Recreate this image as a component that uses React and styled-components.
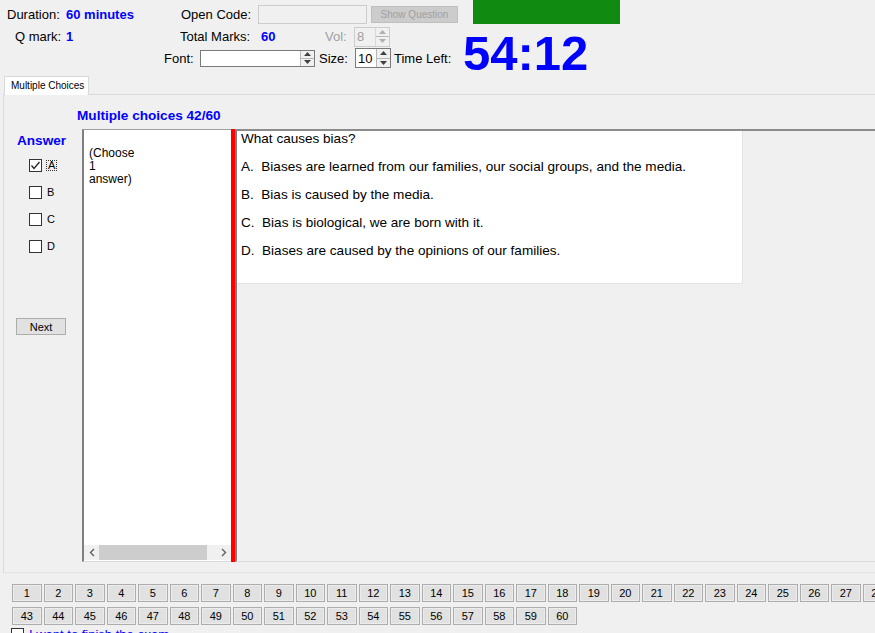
import React from "react";
import styled, { createGlobalStyle } from "styled-components";

const GlobalStyle = createGlobalStyle`
  html, body {
    margin: 0;
    padding: 0;
    background: #f0f0f0;
    overflow: hidden;
  }
  body {
    font-family: "Liberation Sans", Arial, sans-serif;
    font-size: 13px;
    color: #000;
  }
`;

const Screen = styled.div`
  width: 875px;
  height: 633px;
  overflow: hidden;
  background: #f0f0f0;
`;

/* ---------- header ---------- */

const Header = styled.header`
  display: flex;
  height: 76px;
`;

const Column = styled.div`
  display: flex;
  flex-direction: column;
  width: ${(p) => p.$w}px;
  padding-top: 2px;
  flex-shrink: 0;
`;

const Line = styled.div`
  display: flex;
  align-items: center;
  height: ${(p) => p.$h}px;
  padding-left: ${(p) => p.$indent || 0}px;
  white-space: nowrap;
`;

const Label = styled.span`
  width: ${(p) => (p.$w ? `${p.$w}px` : "auto")};
  margin-left: ${(p) => p.$ml || 0}px;
  flex-shrink: 0;
  color: ${(p) => (p.$muted ? "#a0a0a0" : "#000")};
`;

const Value = styled.span`
  width: ${(p) => (p.$w ? `${p.$w}px` : "auto")};
  flex-shrink: 0;
  font-weight: bold;
  color: #0000ff;
`;

const TextBox = styled.div`
  width: ${(p) => p.$w}px;
  height: ${(p) => p.$h}px;
  box-sizing: border-box;
  border: 1px solid #cccccc;
  background: #f0f0f0;
`;

const DisabledButton = styled.div`
  width: 87px;
  height: 17px;
  margin-left: 4px;
  box-sizing: border-box;
  border: 1px solid #bfbfbf;
  background: #cccccc;
  color: #a0a0a0;
  font-size: 10px;
  display: flex;
  align-items: center;
  justify-content: center;
`;

const SpinBox = styled.div`
  display: flex;
  width: ${(p) => p.$w}px;
  height: ${(p) => p.$h}px;
  box-sizing: border-box;
  border: 1px solid ${(p) => (p.$disabled ? "#cccccc" : "#7a7a7a")};
  background: ${(p) => (p.$disabled ? "#f0f0f0" : "#fff")};
  color: ${(p) => (p.$disabled ? "#a0a0a0" : "#000")};
  flex-shrink: 0;
`;

const SpinValue = styled.div`
  flex: 1;
  display: flex;
  align-items: center;
  padding-left: 2px;
  font-size: 13px;
`;

const SpinArrows = styled.div`
  width: 13px;
  display: flex;
  flex-direction: column;
  border-left: 1px solid ${(p) => (p.$disabled ? "#d8d8d8" : "#b8b8b8")};
`;

const SpinHalf = styled.div`
  flex: 1;
  display: flex;
  align-items: center;
  justify-content: center;
  background: #f0f0f0;
  & + & {
    border-top: 1px solid ${(p) => (p.$disabled ? "#d8d8d8" : "#b8b8b8")};
  }
`;

const Spinner = ({ w, h, value, disabled }) => {
  const c = disabled ? "#b0b0b0" : "#404040";
  return (
    <SpinBox $w={w} $h={h} $disabled={disabled}>
      <SpinValue>{value}</SpinValue>
      <SpinArrows $disabled={disabled}>
        <SpinHalf $disabled={disabled}>
          <svg width="7" height="4" viewBox="0 0 7 4">
            <polygon points="0,4 3.5,0 7,4" fill={c} />
          </svg>
        </SpinHalf>
        <SpinHalf $disabled={disabled}>
          <svg width="7" height="4" viewBox="0 0 7 4">
            <polygon points="0,0 7,0 3.5,4" fill={c} />
          </svg>
        </SpinHalf>
      </SpinArrows>
    </SpinBox>
  );
};

const TimerCol = styled.div`
  display: flex;
  flex-direction: column;
`;

const GreenBar = styled.div`
  width: 147px;
  height: 24px;
  flex-shrink: 0;
  margin-left: 10px;
  background: #118a11;
`;

const TimeLeft = styled.div`
  margin-top: 5px;
  font-size: 49px;
  line-height: 49px;
  font-weight: bold;
  color: #0000ff;
`;

/* ---------- tab panel ---------- */

const TabStrip = styled.div`
  display: flex;
  height: 18px;
  padding-left: 4px;
`;

const Tab = styled.div`
  position: relative;
  z-index: 1;
  width: 85px;
  height: 19px;
  box-sizing: border-box;
  padding: 3px 0 0 6px;
  background: #fff;
  border: 1px solid #d9d9d9;
  border-bottom: none;
  font-size: 10px;
`;

const Panel = styled.section`
  margin-left: 3px;
  margin-right: -10px;
  border: 1px solid #d9d9d9;
  border-bottom-color: #e4e4e4;
  background: #f0f0f0;
  padding-bottom: 10px;
`;

const Heading = styled.div`
  height: 28px;
  padding: 6px 0 0 73px;
  display: flex;
  align-items: center;
  font-size: 13.6px;
  font-weight: bold;
  color: #0000ff;
`;

const MainRow = styled.div`
  display: flex;
  height: 433px;
`;

const AnswerCol = styled.div`
  width: 78px;
  flex-shrink: 0;
  display: flex;
  flex-direction: column;
`;

const AnswerTitle = styled.div`
  margin-top: 4px;
  padding-left: 13px;
  line-height: 16px;
  font-size: 13.6px;
  font-weight: bold;
  color: #0000ff;
`;

const ChoiceList = styled.div`
  margin-top: 3px;
  padding-left: 25px;
`;

const Choice = styled.div`
  display: flex;
  align-items: center;
  height: 27px;
`;

const Box = styled.span`
  width: 13px;
  height: 13px;
  box-sizing: border-box;
  border: 1px solid #333;
  background: #fff;
  display: flex;
  align-items: center;
  justify-content: center;
  flex-shrink: 0;
`;

const ChoiceLabel = styled.span`
  margin-left: ${(p) => (p.$focused ? 4 : 5)}px;
  font-size: 11px;
  line-height: 9px;
  padding: ${(p) => (p.$focused ? "0 1px" : "0")};
  border: ${(p) => (p.$focused ? "1px dotted #333" : "none")};
`;

const CheckBox = ({ checked }) => (
  <Box>
    {checked && (
      <svg width="11" height="11" viewBox="0 0 11 11">
        <polyline points="1.5,5.5 4,8.5 9.5,2" fill="none" stroke="#222" strokeWidth="1.3" />
      </svg>
    )}
  </Box>
);

const PlainButton = styled.div`
  width: 50px;
  height: 17px;
  margin: 58px 0 0 12px;
  box-sizing: border-box;
  border: 1px solid #adadad;
  background: #e1e1e1;
  font-size: 11px;
  display: flex;
  align-items: center;
  justify-content: center;
`;

const LeftBox = styled.div`
  width: 149px;
  flex-shrink: 0;
  box-sizing: border-box;
  display: flex;
  flex-direction: column;
  background: #fff;
  border-top: 1px solid #a0a0a0;
  border-left: 2px solid #808080;
  border-bottom: 1px solid #dcdcdc;
`;

const HintText = styled.div`
  flex: 1;
  padding: 17px 0 0 5px;
  font-size: 12px;
  line-height: 13px;
`;

const HScroll = styled.div`
  display: flex;
  height: 15px;
  margin-bottom: 1px;
  background: #f0f0f0;
`;

const ScrollArrow = styled.div`
  width: 15px;
  display: flex;
  align-items: center;
  justify-content: center;
`;

const ScrollTrack = styled.div`
  flex: 1;
  display: flex;
  align-items: stretch;
`;

const ScrollThumb = styled.div`
  width: 108px;
  background: #cdcdcd;
`;

const RedBar = styled.div`
  width: 4px;
  flex-shrink: 0;
  background: #ff0000;
`;

const RightArea = styled.div`
  flex: 1;
  min-width: 0;
  box-sizing: border-box;
  border-left: 2px solid #7d7d7d;
  border-top: 2px solid #8c8c8c;
  border-bottom: 1px solid #dcdcdc;
`;

const QuestionBox = styled.div`
  width: 506px;
  height: 153px;
  box-sizing: border-box;
  padding-left: 4px;
  background: #fff;
  border-right: 1px solid #e3e3e3;
  border-bottom: 1px solid #e3e3e3;
  font-size: 13.55px;
  line-height: 15px;
`;

const QLine = styled.div`
  margin-top: ${(p) => (p.$first ? 0 : 13)}px;
  white-space: pre;
`;

/* ---------- question navigator ---------- */

const Navigator = styled.nav`
  margin-top: 11px;
  padding-left: 12px;
  display: flex;
  flex-direction: column;
  gap: 5px;
`;

const NavRow = styled.div`
  display: flex;
  gap: 2px;
`;

const NumButton = styled.div`
  width: 29.5px;
  height: 18px;
  flex-shrink: 0;
  box-sizing: border-box;
  border: 1px solid #adadad;
  box-shadow: inset 0 0 0 1px #ececec;
  background: #e1e1e1;
  font-size: 11px;
  display: flex;
  align-items: center;
  justify-content: center;
`;

const FinishRow = styled.div`
  display: flex;
  align-items: center;
  margin-top: 2px;
  padding-left: 11px;
  gap: 5px;
  color: #0000ff;
`;

const range = (a, b) => Array.from({ length: b - a + 1 }, (_, i) => a + i);

const choices = ["A", "B", "C", "D"];
const options = [
  "A.  Biases are learned from our families, our social groups, and the media.",
  "B.  Bias is caused by the media.",
  "C.  Bias is biological, we are born with it.",
  "D.  Biases are caused by the opinions of our families.",
];

export default function App() {
  return (
    <Screen>
      <GlobalStyle />
      <Header>
        <Column $w={160}>
          <Line $h={24} $indent={7}>
            <Label $w={59}>Duration:</Label>
            <Value>60 minutes</Value>
          </Line>
          <Line $h={21} $indent={15}>
            <Label $w={51}>Q mark:</Label>
            <Value>1</Value>
          </Line>
        </Column>
        <Column $w={303}>
          <Line $h={24} $indent={21}>
            <Label $w={77}>Open Code:</Label>
            <TextBox $w={109} $h={19} />
            <DisabledButton>Show Question</DisabledButton>
          </Line>
          <Line $h={21} $indent={20}>
            <Label $w={81}>Total Marks:</Label>
            <Value $w={64}>60</Value>
            <Label $w={29} $muted>Vol:</Label>
            <Spinner w={36} h={20} value="8" disabled />
          </Line>
          <Line $h={22} $indent={4}>
            <Label $w={36}>Font:</Label>
            <Spinner w={115} h={17} value="" />
            <Label $w={36} $ml={4}>Size:</Label>
            <Spinner w={36} h={20} value="10" />
            <Label $ml={3}>Time Left:</Label>
          </Line>
        </Column>
        <TimerCol>
          <GreenBar />
          <TimeLeft>54:12</TimeLeft>
        </TimerCol>
      </Header>

      <TabStrip>
        <Tab>Multiple Choices</Tab>
      </TabStrip>
      <Panel>
        <Heading>Multiple choices 42/60</Heading>
        <MainRow>
          <AnswerCol>
            <AnswerTitle>Answer</AnswerTitle>
            <ChoiceList>
              {choices.map((c, i) => (
                <Choice key={c}>
                  <CheckBox checked={i === 0} />
                  <ChoiceLabel $focused={i === 0}>{c}</ChoiceLabel>
                </Choice>
              ))}
            </ChoiceList>
            <PlainButton>Next</PlainButton>
          </AnswerCol>
          <LeftBox>
            <HintText>
              (Choose
              <br />1<br />
              answer)
            </HintText>
            <HScroll>
              <ScrollArrow>
                <svg width="6" height="9" viewBox="0 0 6 9">
                  <polyline points="5,1 1.5,4.5 5,8" fill="none" stroke="#606060" strokeWidth="1.4" />
                </svg>
              </ScrollArrow>
              <ScrollTrack>
                <ScrollThumb />
              </ScrollTrack>
              <ScrollArrow>
                <svg width="6" height="9" viewBox="0 0 6 9">
                  <polyline points="1,1 4.5,4.5 1,8" fill="none" stroke="#606060" strokeWidth="1.4" />
                </svg>
              </ScrollArrow>
            </HScroll>
          </LeftBox>
          <RedBar />
          <RightArea>
            <QuestionBox>
              <QLine $first>What causes bias?</QLine>
              {options.map((o) => (
                <QLine key={o}>{o}</QLine>
              ))}
            </QuestionBox>
          </RightArea>
        </MainRow>
      </Panel>

      <Navigator>
        <NavRow>
          {range(1, 42).map((n) => (
            <NumButton key={n}>{n}</NumButton>
          ))}
        </NavRow>
        <NavRow>
          {range(43, 60).map((n) => (
            <NumButton key={n}>{n}</NumButton>
          ))}
        </NavRow>
      </Navigator>
      <FinishRow>
        <CheckBox />
        <span>I want to finish the exam</span>
      </FinishRow>
    </Screen>
  );
}
